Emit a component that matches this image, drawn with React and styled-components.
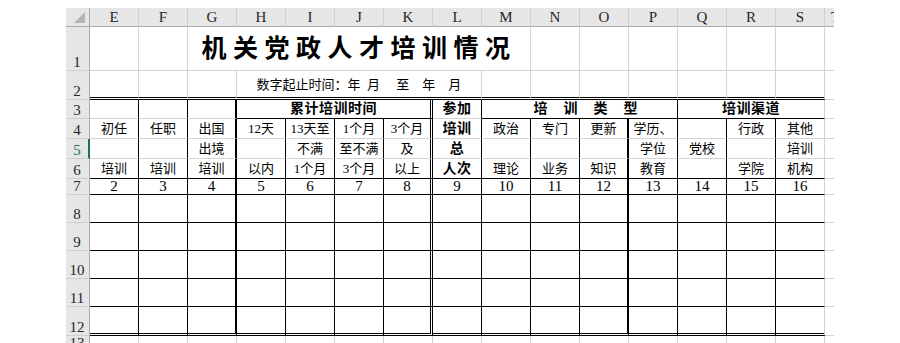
import React from 'react'
import styled, {createGlobalStyle} from 'styled-components'

const GlobalStyle = createGlobalStyle`
  html, body {
    margin: 0;
    padding: 0;
    background: #fff;
    overflow: hidden;
  }
`

const LINES = {
  g: '1px solid #d4d4d4',
  k: '1px solid #000',
  K: '2px solid #000',
  d: '3px double #000',
  n: 'none',
}

const COLS = ['E', 'F', 'G', 'H', 'I', 'J', 'K', 'L', 'M', 'N', 'O', 'P', 'Q', 'R', 'S']
const HEIGHTS = [44, 29, 19, 20, 20, 20, 16, 28, 28, 28, 28, 29, 16]

const VARIANTS = {
  title: {size: 25, bold: true, ls: 6.5},
  date: {size: 13},
  bold: {size: 14, bold: true, ls: 0.5},
  wide: {size: 14, bold: true, ls: 16, pl: 28},
  num: {size: 15},
  text: {size: 13},
}

const blank = n => Array.from({length: n}, () => [1, ''])
const singles = (list, variant = 'text', boldAt = -1) =>
  list.map((t, i) => [1, t, i === boldAt ? 'bold' : variant])

const ROWS = [
  [...blank(2), [7, '机关党政人才培训情况', 'title'], ...blank(6)],
  [...blank(3), [5, '数字起止时间：年  月     至    年    月', 'date'], ...blank(7)],
  [...blank(3), [4, '累计培训时间', 'bold'], [1, '参加', 'bold'], [4, '培训类型', 'wide'], [3, '培训渠道', 'bold']],
  singles(['初任', '任职', '出国', '12天', '13天至', '1个月', '3个月', '培训', '政治', '专门', '更新', '学历、', '', '行政', '其他'], 'text', 7),
  singles(['', '', '出境', '', '不满', '至不满', '及', '总', '', '', '', '学位', '党校', '', '培训'], 'text', 7),
  singles(['培训', '培训', '培训', '以内', '1个月', '3个月', '以上', '人次', '理论', '业务', '知识', '教育', '', '学院', '机构'], 'text', 7),
  singles(Array.from({length: 15}, (_, i) => String(i + 2)), 'num'),
  blank(15),
  blank(15),
  blank(15),
  blank(15),
  blank(15),
  blank(15),
]

// border kinds for the printed table (rows 3 to 12)
const rightLine = (row, col) => {
  if (row < 3 || row > 12) return 'g'
  if (col === 2 || col === 10) return 'K'
  if (col === 6) return 'd'
  if (col === 14) return 'g'
  return 'k'
}

const bottomLine = (row, col) => {
  if (row === 2 || row === 12) return 'd'
  if (row === 3) return col <= 2 || col === 7 ? 'g' : 'k'
  if (row >= 6 && row <= 11) return 'k'
  return 'g'
}

const Sheet = styled.div`
  width: 768px;
  height: 335px;
  margin: 8px auto 0;
  overflow: hidden;
  display: grid;
  grid-template-columns: 24px repeat(15, 49px) 9px;
  grid-template-rows: 19px ${HEIGHTS.map(h => `${h}px`).join(' ')};
  font-family: "Liberation Serif", "Noto Sans CJK SC", serif;
`

const Corner = styled.div`
  box-sizing: border-box;
  background: #e6e6e6;
  border-right: 1px solid #ababab;
  border-bottom: 1px solid #ababab;

  svg {
    display: block;
  }
`

const ColHead = styled.div`
  box-sizing: border-box;
  background: #e6e6e6;
  border-right: ${p => (p.$last ? 'none' : '1px solid #cfcfcf')};
  border-bottom: 1px solid #ababab;
  display: flex;
  align-items: center;
  justify-content: ${p => (p.$last ? 'flex-start' : 'center')};
  padding: 1px 0 0 ${p => (p.$last ? 6 : 0)}px;
  overflow: hidden;
  font-size: 15px;
  line-height: 1;
  color: #262626;
`

const RowHead = styled.div`
  box-sizing: border-box;
  background: #e6e6e6;
  border-right: ${p => (p.$active ? '2px solid #217346' : '1px solid #ababab')};
  border-bottom: 1px solid #cfcfcf;
  display: flex;
  align-items: flex-end;
  justify-content: center;
  padding-right: ${p => (p.$active ? 0 : 1)}px;
  font-size: 15px;
  line-height: 1;
  color: ${p => (p.$active ? '#217346' : '#262626')};
`

const Cell = styled.div`
  box-sizing: border-box;
  grid-column: span ${p => p.$span};
  min-width: 0;
  border-right: ${p => LINES[p.$r]};
  border-bottom: ${p => LINES[p.$b]};
  display: flex;
  align-items: center;
  justify-content: center;
  padding-left: ${p => p.$pl || 0}px;
  font-size: ${p => p.$size}px;
  font-weight: ${p => (p.$bold ? 700 : 400)};
  letter-spacing: ${p => p.$ls || 0}px;
  line-height: 1;
  white-space: pre;
  color: #000;
`

const Spill = styled.div`
  box-sizing: border-box;
  border-bottom: 1px solid #d4d4d4;
`

function SheetRow({row, cells}) {
  let col = 0
  return (
    <>
      <RowHead $active={row === 5}>{row}</RowHead>
      {cells.map(([span, text, variant = 'text']) => {
        const start = col
        col += span
        const v = VARIANTS[variant]
        return (
          <Cell
            key={start}
            $span={span}
            $r={rightLine(row, col - 1)}
            $b={bottomLine(row, start)}
            $size={v.size}
            $bold={v.bold}
            $ls={v.ls}
            $pl={v.pl}
          >
            {text}
          </Cell>
        )
      })}
      <Spill />
    </>
  )
}

export default function App() {
  return (
    <>
      <GlobalStyle />
      <Sheet>
        <Corner>
          <svg width="23" height="18" viewBox="0 0 23 18">
            <polygon points="19,4 19,15 8,15" fill="#b5b5b5" />
          </svg>
        </Corner>
        {COLS.map(c => (
          <ColHead key={c}>{c}</ColHead>
        ))}
        <ColHead $last>T</ColHead>
        {ROWS.map((cells, i) => (
          <SheetRow key={i} row={i + 1} cells={cells} />
        ))}
      </Sheet>
    </>
  )
}
